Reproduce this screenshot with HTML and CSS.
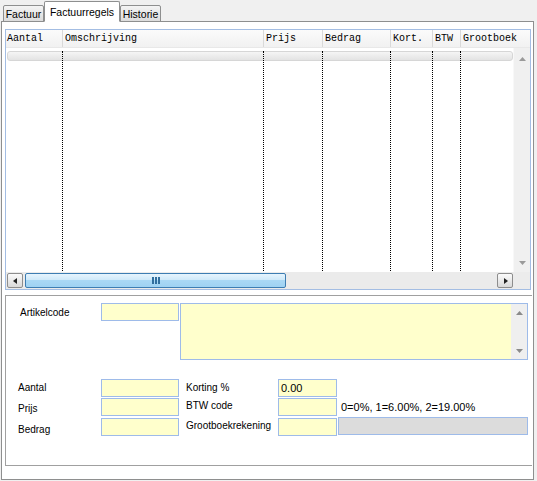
FILE: index.html
```html
<!DOCTYPE html>
<html>
<head>
<meta charset="utf-8">
<link rel="stylesheet" href="styles.css">
</head>
<body>
<div class="tabs">
  <div class="tab tab-a">Factuur</div>
  <div class="tab tab-b active">Factuurregels</div>
  <div class="tab tab-c">Historie</div>
</div>
<div class="panel">
  <div class="grid-table">
    <div class="thead">
      <div class="th first">Aantal</div>
      <div class="th">Omschrijving</div>
      <div class="th">Prijs</div>
      <div class="th">Bedrag</div>
      <div class="th">Kort.</div>
      <div class="th">BTW</div>
      <div class="th">Grootboek</div>
    </div>
    <div class="tmain">
      <div class="tbody">
        <div class="rowbar"></div>
        <div class="cols">
          <div></div><div></div><div></div><div></div><div></div><div></div><div></div>
        </div>
      </div>
      <div class="vscroll">
        <svg class="arr" width="7" height="4" viewBox="0 0 7 4"><path d="M0 4 L3.5 0 L7 4 Z" fill="#9a9a9a"/></svg>
        <svg class="arr" width="7" height="4" viewBox="0 0 7 4"><path d="M0 0 L3.5 4 L7 0 Z" fill="#9a9a9a"/></svg>
      </div>
    </div>
    <div class="hrow">
      <div class="hscroll">
        <div class="sbtn"><svg width="5" height="6" viewBox="0 0 5 6"><path d="M4 0 L0 3 L4 6 Z" fill="#222"/></svg></div>
        <div class="thumb"><svg width="8" height="7" viewBox="0 0 8 7"><rect x="0" y="0" width="2" height="7" fill="#2f6e9e"/><rect x="3" y="0" width="2" height="7" fill="#2f6e9e"/><rect x="6" y="0" width="2" height="7" fill="#2f6e9e"/></svg></div>
        <div class="sbtn end"><svg width="5" height="6" viewBox="0 0 5 6"><path d="M1 0 L5 3 L1 6 Z" fill="#222"/></svg></div>
      </div>
      <div class="corner"></div>
    </div>
  </div>

  <div class="form">
    <div class="row-top">
      <div class="lbl lbl-art">Artikelcode</div>
      <div class="fld"></div>
      <div class="memo">
        <div class="memo-text"></div>
        <div class="memo-scroll">
          <svg width="7" height="4" viewBox="0 0 7 4"><path d="M0 4 L3.5 0 L7 4 Z" fill="#8a8a8a"/></svg>
          <svg width="7" height="4" viewBox="0 0 7 4"><path d="M0 0 L3.5 4 L7 0 Z" fill="#8a8a8a"/></svg>
        </div>
      </div>
    </div>
    <div class="fgrid">
      <div class="lbl lbl-l">Aantal</div>
      <div class="fld"></div>
      <div class="lbl lbl-r">Korting %</div>
      <div class="fld small">0.00</div>
      <div></div>

      <div class="lbl lbl-l down2">Prijs</div>
      <div class="fld"></div>
      <div class="lbl lbl-r up1">BTW code</div>
      <div class="fld small"></div>
      <div class="hint">0=0%, 1=6.00%, 2=19.00%</div>

      <div class="lbl lbl-l down3">Bedrag</div>
      <div class="fld"></div>
      <div class="lbl lbl-r up1">Grootboekrekening</div>
      <div class="fld small"></div>
      <div class="grey"></div>
    </div>
  </div>
</div>
</body>
</html>
```

FILE: styles.css
```css
* { box-sizing: border-box; }
html, body { margin: 0; padding: 0; }
body {
  width: 537px;
  height: 481px;
  overflow: hidden;
  background: #f0f0f0;
  font-family: "Liberation Sans", Arial, sans-serif;
  color: #000;
}

/* tabs */
.tabs {
  display: flex;
  align-items: flex-end;
  height: 21px;
  padding-left: 3px;
  position: relative;
  z-index: 1;
}
.tab {
  height: 17px;
  margin-bottom: -1px;
  border: 1px solid #8e8f8f;
  border-radius: 2px 2px 0 0;
  background: linear-gradient(#f4f4f4, #dcdcdc);
  font-size: 10.5px;
  line-height: 16px;
  text-align: center;
  white-space: nowrap;
}
.tab-a { width: 41px; }
.tab-b { width: 76px; }
.tab-c { width: 41px; }
.tab.active {
  height: 21px;
  background: #fff;
  border-bottom-color: #fff;
  line-height: 18px;
  padding-top: 1px;
}

/* panel */
.panel {
  margin-left: 1px;
  width: 533px;
  height: 459px;
  border: 1px solid #8e8f8f;
  background: #fff;
  padding: 7px 0 0 3px;
}

.grid-table {
  width: 526px;
  height: 261px;
  border: 1px solid #a3bde3;
  display: flex;
  flex-direction: column;
}
.thead {
  height: 18px;
  display: grid;
  grid-template-columns: 56px 201px 59px 68px 42px 28px 1fr;
  background: linear-gradient(#fbfbfb, #f1f1f1);
  border-bottom: 1px solid #e8e8e8;
}
.th {
  font-family: "Liberation Mono", "DejaVu Sans Mono", monospace;
  font-size: 10px;
  line-height: 17px;
  padding-left: 2px;
  border-left: 1px solid #d9d9d9;
  white-space: nowrap;
  overflow: hidden;
}
.th.first { border-left: none; padding-left: 1px; }

.tmain {
  height: 224px;
  display: flex;
}
.tbody {
  flex: 1;
  position: relative;
  background: #fff;
}
.rowbar {
  margin: 3px 0 0 1px;
  height: 10px;
  border: 1px solid #d6d6d6;
  border-radius: 3px;
  background: linear-gradient(#f5f5f5, #e3e3e3);
}
.cols {
  position: absolute;
  top: 3px;
  bottom: 1px;
  left: 0;
  right: 0;
  display: grid;
  grid-template-columns: 56px 201px 59px 68px 42px 28px 1fr;
}
.cols > div { border-left: 1px dotted #000; }
.cols > div:first-child { border-left: none; }

.vscroll {
  width: 17px;
  background: #f0f0f0;
  border-left: 1px solid #f8f8f8;
  display: flex;
  flex-direction: column;
  justify-content: space-between;
  align-items: center;
  padding: 9px 0 7px;
}

.hrow {
  height: 17px;
  display: flex;
}
.hscroll {
  flex: 1;
  display: flex;
  align-items: flex-start;
  padding-top: 1px;
  background: #ebebeb;
}
.sbtn {
  width: 16px;
  height: 15px;
  margin-left: 1px;
  border: 1px solid #8d8d8d;
  border-radius: 2px;
  background: linear-gradient(#fbfbfb, #d9d9d9);
  display: flex;
  align-items: center;
  justify-content: center;
}
.sbtn.end { margin-left: auto; }
.thumb {
  margin-left: 2px;
  width: 261px;
  height: 15px;
  border: 1px solid #3d7db2;
  border-radius: 2px;
  background: linear-gradient(#e6f4fd, #cfe9f9 45%, #a9d8f5 50%, #9fd2f2);
  display: flex;
  align-items: center;
  justify-content: center;
}
.corner {
  width: 17px;
  background: #ececec;
}

/* form */
.form {
  margin-top: 5px;
  width: 527px;
  height: 171px;
  border: 1px solid #a0a0a0;
  border-right: none;
  padding-top: 7px;
}
.row-top {
  display: flex;
  align-items: flex-start;
}
.lbl {
  font-size: 10px;
  line-height: 18px;
  white-space: nowrap;
}
.lbl-art { width: 95px; padding-left: 14px; padding-top: 1px; }
.fld {
  width: 78px;
  height: 18px;
  border: 1px solid #9ebbe9;
  background: #ffffcc;
  font-size: 11px;
  line-height: 16px;
  padding-left: 2px;
}
.fld.small { width: 59px; }
.memo {
  margin-left: 1px;
  width: 348px;
  height: 57px;
  border: 1px solid #9ebbe9;
  background: #ffffcc;
  display: flex;
}
.memo-text { flex: 1; }
.memo-scroll {
  width: 16px;
  background: #efefef;
  display: flex;
  flex-direction: column;
  justify-content: space-between;
  align-items: center;
  padding: 7px 0 6px;
}

.fgrid {
  margin-top: 19px;
  display: grid;
  grid-template-columns: 95px 78px 99px 59px 191px;
  grid-template-rows: 19px 20px 18px;
  align-items: start;
}
.lbl-l { padding-left: 12px; }
.lbl-r { padding-left: 7px; }
.down2 { padding-top: 2px; }
.down3 { padding-top: 3px; }
.up1 { margin-top: -1px; }
.hint {
  font-size: 11px;
  line-height: 18px;
  padding-left: 4px;
  white-space: nowrap;
}
.grey {
  margin-left: 1px;
  margin-top: -1px;
  width: 190px;
  height: 18px;
  border: 1px solid #9ebbe9;
  background: #dcdcdc;
}
```
